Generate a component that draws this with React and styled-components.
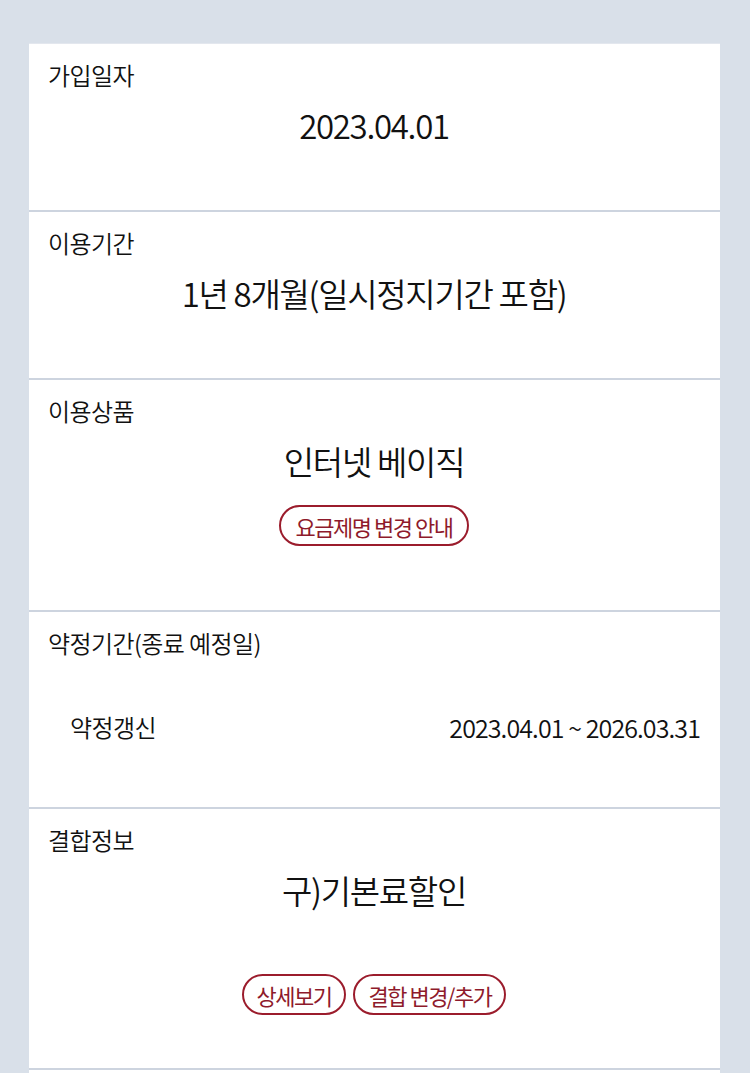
import React from "react";
import styled, { createGlobalStyle } from "styled-components";

const Global = createGlobalStyle`
  html, body { margin: 0; padding: 0; }
  body {
    background: #d9e0e9;
    font-family: "Noto Sans CJK KR", "Noto Sans", sans-serif;
    color: #111;
  }
`;

const Page = styled.div`
  padding: 43px 30px 0 29px;
  height: 1073px;
  box-sizing: border-box;
  overflow: hidden;
`;

const Card = styled.div`
  background: #fff;
  display: flex;
  flex-direction: column;
  border-top: 1px solid #e3e7ee;
`;

const Section = styled.section`
  height: ${(p) => p.$h}px;
  box-sizing: border-box;
  padding: 16px 20px 0 19px;
  display: flex;
  flex-direction: column;
  border-bottom: 2px solid #cdd4df;
`;

const Label = styled.div`
  font-size: 24px;
  line-height: 30px;
  letter-spacing: -0.6px;
  font-weight: 350;
  color: #111;
`;

const Value = styled.div`
  margin-top: 15px;
  text-align: center;
  font-size: 33px;
  line-height: 40px;
  letter-spacing: -1.3px;
  font-weight: 350;
  color: #111;
`;

const Buttons = styled.div`
  margin-top: ${(p) => p.$mt}px;
  display: flex;
  justify-content: center;
  gap: 7px;
`;

const Pill = styled.button`
  height: 41px;
  box-sizing: border-box;
  padding: 0 ${(p) => p.$px || 13}px;
  border: 2px solid #9b1c2c;
  border-radius: 21px;
  background: #fff;
  color: #8e1a2b;
  font-family: "Noto Sans CJK KR", "Noto Sans", sans-serif;
  font-size: 22px;
  letter-spacing: -1.5px;
  line-height: 1;
  cursor: pointer;
`;

const Row = styled.div`
  margin-top: 54px;
  display: flex;
  justify-content: space-between;
  align-items: center;
  padding-left: 22px;
  font-size: 24px;
  line-height: 30px;
  font-weight: 350;
`;

const RowKey = styled.span`
  letter-spacing: -0.6px;
`;

const RowVal = styled.span`
  font-size: 25px;
  letter-spacing: -0.9px;
`;

export default function App() {
  return (
    <>
      <Global />
      <Page>
        <Card>
          <Section $h={168}>
            <Label>가입일자</Label>
            <Value>2023.04.01</Value>
          </Section>
          <Section $h={168}>
            <Label>이용기간</Label>
            <Value>1년 8개월(일시정지기간 포함)</Value>
          </Section>
          <Section $h={232}>
            <Label>이용상품</Label>
            <Value>인터넷 베이직</Value>
            <Buttons $mt={24}>
              <Pill $px={15}>요금제명 변경 안내</Pill>
            </Buttons>
          </Section>
          <Section $h={197}>
            <Label>약정기간(종료 예정일)</Label>
            <Row>
              <RowKey>약정갱신</RowKey>
              <RowVal>2023.04.01 ~ 2026.03.31</RowVal>
            </Row>
          </Section>
          <Section $h={261}>
            <Label>결합정보</Label>
            <Value>구)기본료할인</Value>
            <Buttons $mt={64}>
              <Pill>상세보기</Pill>
              <Pill>결합 변경/추가</Pill>
            </Buttons>
          </Section>
          <Section $h={40} />
        </Card>
      </Page>
    </>
  );
}
